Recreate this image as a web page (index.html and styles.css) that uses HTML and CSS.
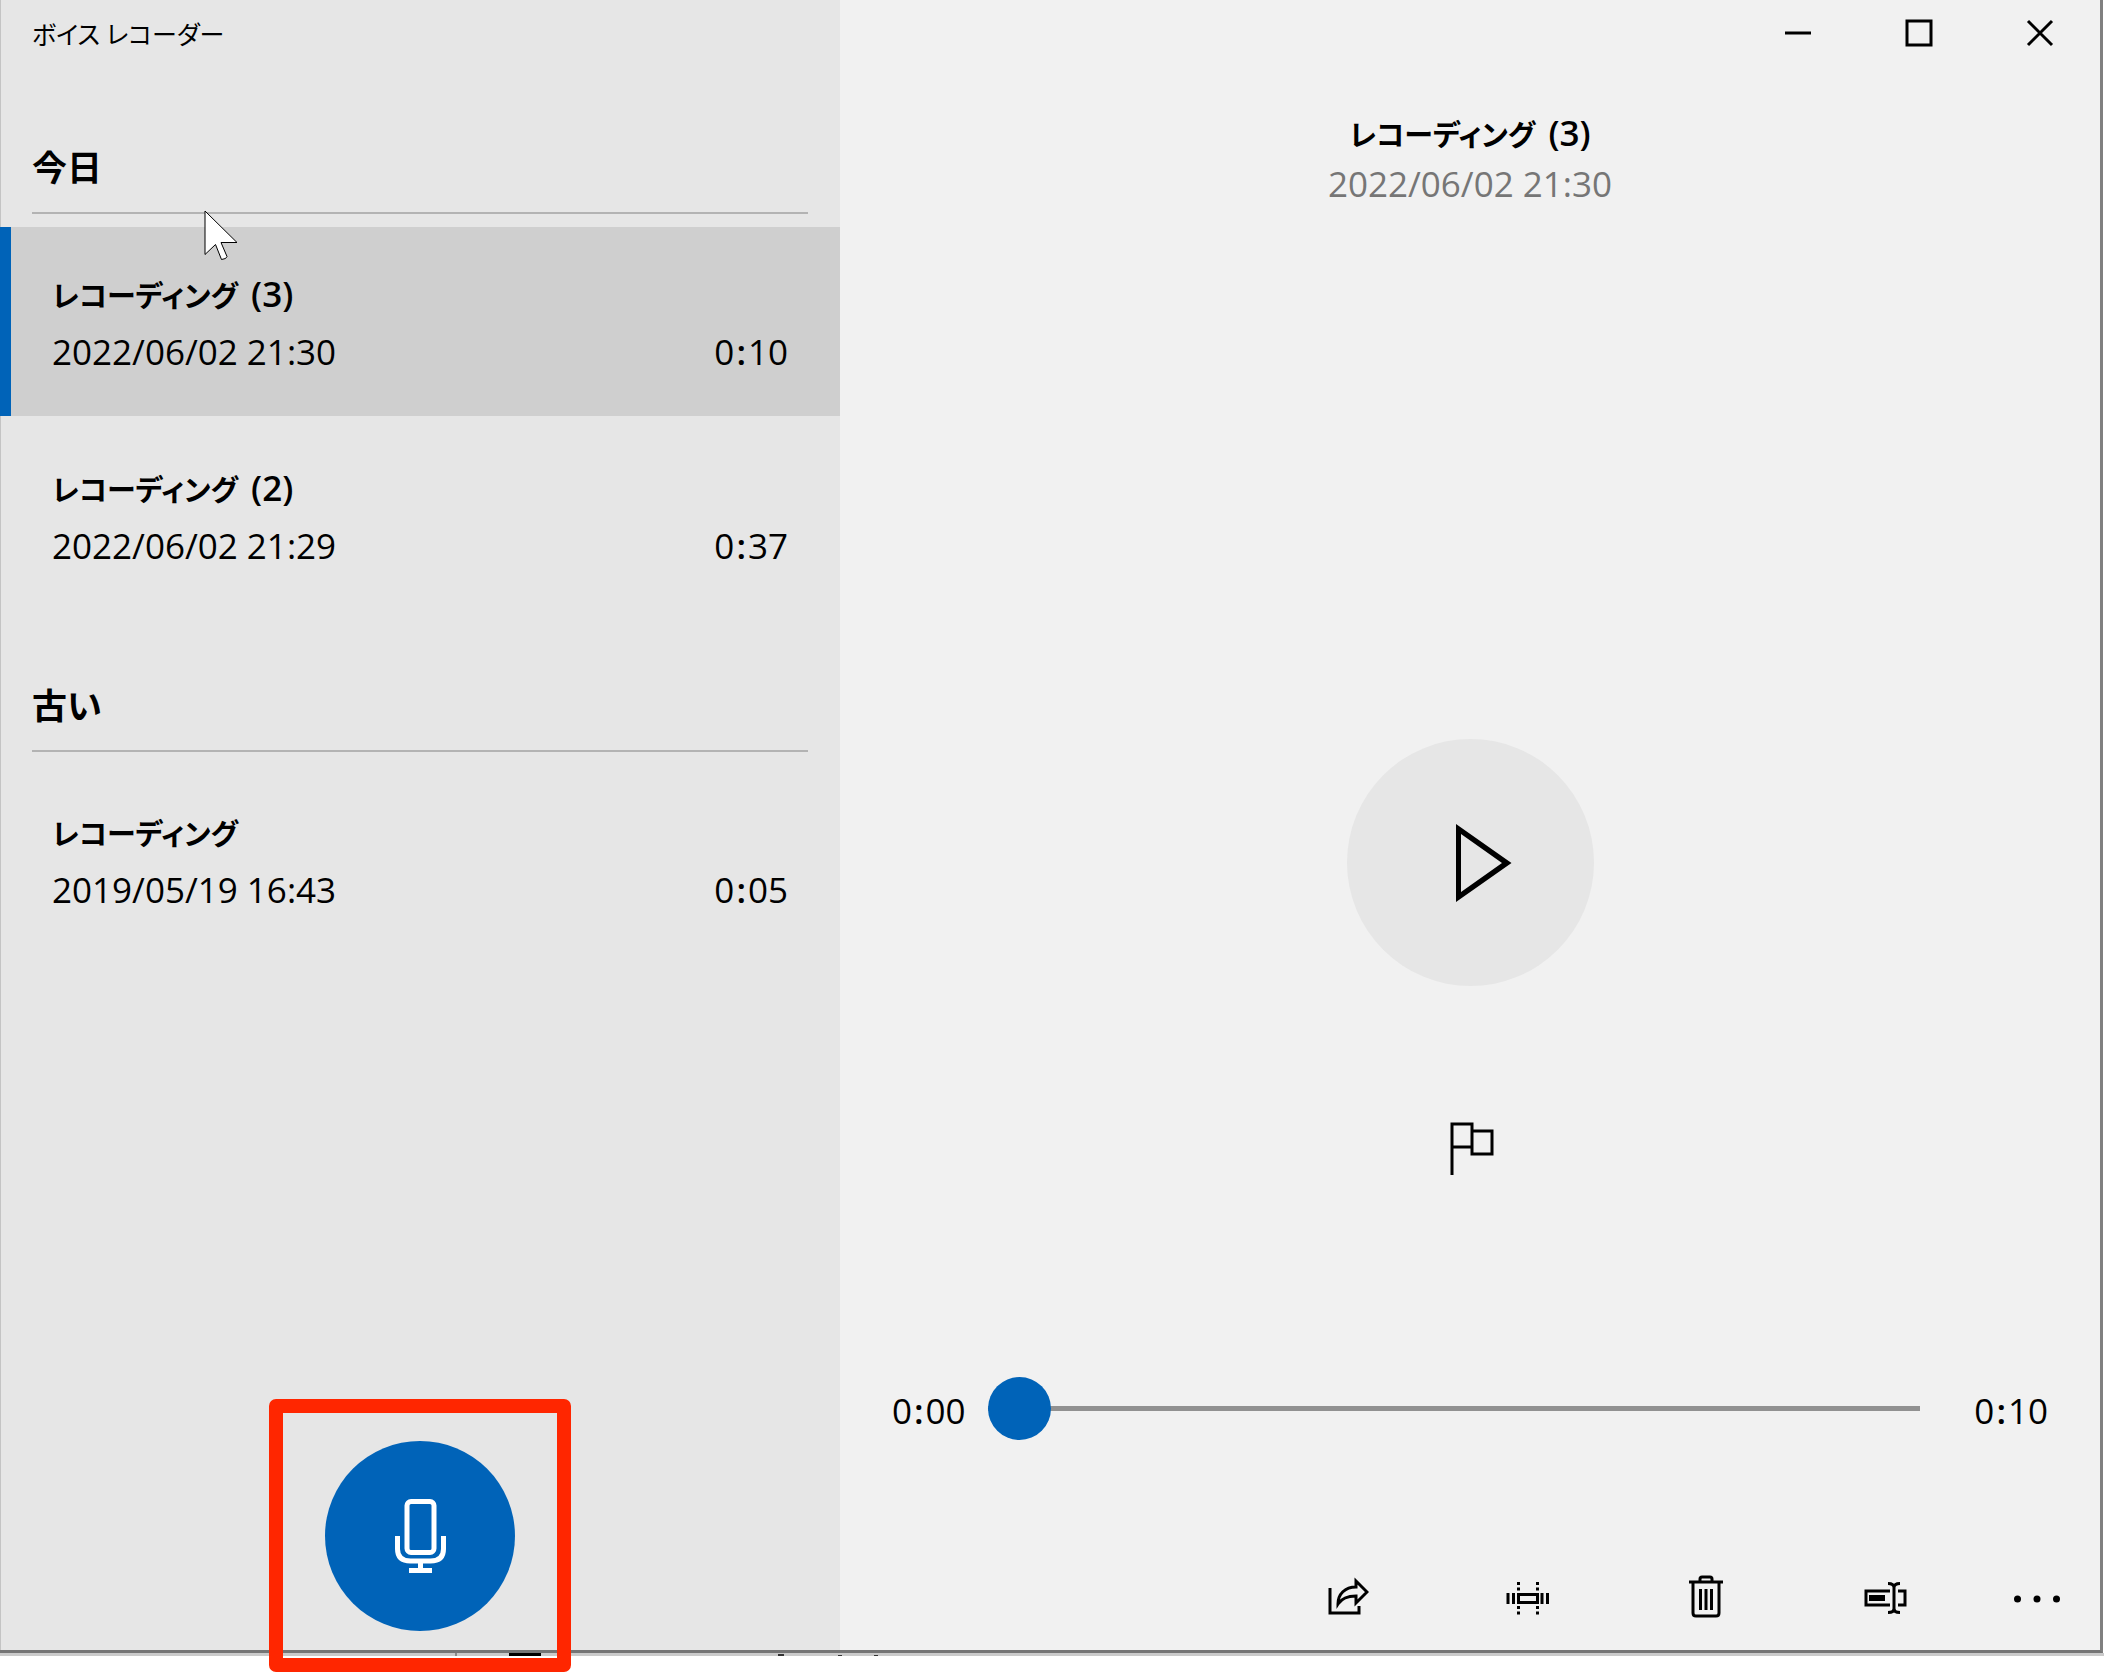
FILE: index.html
```html
<!DOCTYPE html>
<html lang="ja">
<head>
<meta charset="utf-8">
<meta name="viewport" content="width=device-width, initial-scale=1">
<title>ボイス レコーダー</title>
<link rel="stylesheet" href="styles.css">
</head>
<body>
<div class="app">
  <aside class="sidebar">
    <h1 class="app-title">ボイス レコーダー</h1>

    <section class="group">
      <h2 class="group-title">今日</h2>
      <ul class="recordings">
        <li>
          <button class="recording selected" type="button">
            <span class="name">レコーディング<span class="count"> (3)</span></span>
            <span class="meta"><span>2022/06/02 21:30</span><span>0<span class="colon">:</span>10</span></span>
          </button>
        </li>
        <li>
          <button class="recording" type="button">
            <span class="name">レコーディング<span class="count"> (2)</span></span>
            <span class="meta"><span>2022/06/02 21:29</span><span>0<span class="colon">:</span>37</span></span>
          </button>
        </li>
      </ul>
    </section>

    <section class="group">
      <h2 class="group-title">古い</h2>
      <ul class="recordings">
        <li>
          <button class="recording" type="button">
            <span class="name">レコーディング</span>
            <span class="meta"><span>2019/05/19 16:43</span><span>0<span class="colon">:</span>05</span></span>
          </button>
        </li>
      </ul>
    </section>

    <div class="record-area">
      <button class="record" type="button" aria-label="録音">
        <svg width="53" height="76" viewBox="0 0 53 76" fill="none" stroke="#fff" stroke-width="5">
          <rect x="13" y="3.5" width="27" height="51" rx="4"/>
          <path d="M3.500 38v13q0 12 13 12h20q13 0 13-12V38M26.500 63v9M15 72.500h23"/>
        </svg>
      </button>
      <div class="highlight"></div>
    </div>
  </aside>

  <main class="player">
    <div class="caption">
      <button type="button" aria-label="最小化"><svg width="28" height="28" viewBox="0 0 28 28"><path d="M1 14h26"/></svg></button>
      <button type="button" aria-label="最大化"><svg width="28" height="28" viewBox="0 0 28 28"><path d="M2 2h24v24H2z"/></svg></button>
      <button type="button" aria-label="閉じる"><svg width="28" height="28" viewBox="0 0 28 28"><path d="M2 2l24 24M26 2L2 26"/></svg></button>
    </div>

    <header class="now">
      <h2 class="name">レコーディング<span class="count"> (3)</span></h2>
      <p class="date">2022/06/02 21:30</p>
    </header>

    <div class="stage">
      <button class="play" type="button" aria-label="再生">
        <svg width="84" height="78" viewBox="0 0 84 78"><path fill-rule="evenodd" d="M28 0L83.500 39 28 78zM33 10v58L74 39z"/></svg>
      </button>
      <button class="flag" type="button" aria-label="マーカーの追加">
        <svg width="48" height="53" viewBox="0 0 48 53"><path d="M6 53V2h20v23H6M26 9h20v23H26V9"/></svg>
      </button>
    </div>

    <div class="timeline">
      <span class="time">0<span class="colon">:</span>00</span>
      <input type="range" min="0" max="10" value="0" aria-label="再生位置">
      <span class="time">0<span class="colon">:</span>10</span>
    </div>

    <div class="toolbar">
      <button type="button" aria-label="共有">
        <svg width="42" height="42" viewBox="0 0 42 42"><path d="M3 13v25h29v-7M29 6l11 11-11 11v-7c-9 0-14 2-18 8 0-10 7-17 18-17z"/></svg>
      </button>
      <button type="button" aria-label="トリミング">
        <svg width="44" height="42" viewBox="0 0 44 42"><path d="M3 18v11M8.500 18v11M37 18v11M42.500 18v11M13.500 19.500h19v8h-19zM13.500 7v3M13.500 12.500v3M13.500 31v3M13.500 36.500v3M32.500 7v3M32.500 12.500v3M32.500 31v3M32.500 36.500v3"/></svg>
      </button>
      <button type="button" aria-label="削除">
        <svg width="36" height="44" viewBox="0 0 36 44"><path d="M1 8h34M12 8V5q0-2 2-2h8q2 0 2 2v3M5 8v31q0 3 3 3h20q3 0 3-3V8M12.500 15v21M18 15v21M23.500 15v21"/></svg>
      </button>
      <button type="button" aria-label="名前の変更">
        <svg width="44" height="42" viewBox="0 0 44 42"><path d="M27 16H3v14h24M35 16h7v14h-7M25 8.500q6 0 6 4v21q0 4-6 4M37 8.500q-6 0-6 4v21q0 4 6 4"/><path class="solid" d="M6 20h16v6H6z"/></svg>
      </button>
      <button class="more" type="button" aria-label="その他">
        <svg width="48" height="42" viewBox="0 0 48 42"><g class="solid"><circle cx="4.500" cy="24" r="3.500"/><circle cx="24" cy="24" r="3.500"/><circle cx="43.500" cy="24" r="3.500"/></g></svg>
      </button>
    </div>
  </main>
</div>

<div class="behind">
  <svg width="900" height="3" viewBox="0 0 900 3"><path fill="#8a8a8a" d="M455 0h2v3h-2z"/><path d="M509 0h32v3h-32z"/><path fill="#333" d="M778 1h6v2h-6zM838 2h4v1h-4zM874 2h4v1h-4z"/></svg>
</div>

<svg class="pointer" width="36" height="54" viewBox="0 0 36 54"><path fill="#fff" stroke="#000" d="M1 1v43.500l10.500-10 6 15 4-1 1.500-2-6-14h16z"/></svg>
</body>
</html>
```

FILE: styles.css
```css
* {
  box-sizing: border-box;
}

body {
  margin: 0;
  min-height: 100vh;
  display: flex;
  flex-direction: column;
  padding-bottom: 16px;
  background: #fff;
  color: #000;
  font-family: "Open Sans", "Noto Sans CJK JP", sans-serif;
  font-size: 35px;
  line-height: 48px;
}

h1, h2, p, ul {
  margin: 0;
  padding: 0;
}

button {
  display: flex;
  align-items: center;
  justify-content: center;
  margin: 0;
  padding: 0;
  border: 0;
  background: none;
  color: inherit;
  font: inherit;
}

.app {
  flex: 1;
  display: grid;
  grid-template-columns: 2fr 3fr;
  margin-right: 1px;
  border-right: 3px solid #808080;
  border-bottom: 3px solid #757575;
}

.sidebar {
  display: flex;
  flex-direction: column;
  box-shadow: inset 1px 0 #c4c4c4;
  background: #e6e6e6;
}

.app-title {
  padding: 10px 32px 0;
  margin-bottom: 14px;
  font-size: 25px;
  font-weight: 400;
  font-feature-settings: "palt";
}

.group {
  padding-top: 72px;
}

.group-title {
  margin: 0 32px 13px;
  padding-bottom: 20px;
  border-bottom: 2px solid #b3b3b3;
  font-size: 35px;
  font-weight: 600;
}

.recordings {
  display: flex;
  flex-direction: column;
  gap: 5px;
  list-style: none;
}

.recording {
  width: 100%;
  height: 189px;
  flex-direction: column;
  align-items: stretch;
  gap: 8px;
  padding: 5px 52px 0;
  text-align: left;
}

.selected {
  padding-left: 41px;
  border-left: 11px solid #0063b8;
  background: #cfcfcf;
}

.name {
  font-size: 29px;
  font-weight: 600;
  font-feature-settings: "palt";
}

.count {
  margin-left: 4px;
  font-size: 35px;
  line-height: 1;
  white-space: pre;
}

.colon {
  padding: 0 2px;
  font-weight: 600;
}

.meta {
  display: flex;
  justify-content: space-between;
}

.record-area {
  position: relative;
  display: flex;
  justify-content: center;
  margin-top: auto;
  padding-bottom: 19px;
}

.record {
  width: 190px;
  height: 190px;
  border-radius: 50%;
  background: #0063b8;
}

.highlight {
  position: absolute;
  top: -42px;
  left: calc(50% - 151px);
  width: 302px;
  height: 273px;
  border: 14px solid #ff2600;
  border-radius: 7px;
  z-index: 1;
}

.player {
  display: flex;
  flex-direction: column;
  background: #f1f1f1;
}

.caption {
  display: flex;
  justify-content: flex-end;
}

.caption button {
  width: 121px;
  height: 66px;
}

.player svg {
  fill: none;
  stroke: #000;
  stroke-width: 3;
}

.now {
  padding-top: 45px;
  text-align: center;
}

.date {
  margin-top: 1px;
  color: #767676;
}

.stage {
  flex: 1;
  display: flex;
  flex-direction: column;
  align-items: center;
}

.stage::before {
  content: "";
  flex: 29;
}

.stage::after {
  content: "";
  flex: 11;
}

.play {
  width: 247px;
  height: 247px;
  margin-bottom: 136px;
  border-radius: 50%;
  background: #e6e6e6;
}

.player .play svg, .player .solid {
  fill: #000;
  stroke: none;
}

.timeline {
  display: flex;
  align-items: center;
  gap: 22px;
  padding: 0 52px;
}

.time {
  padding-top: 4px;
}

.timeline input {
  flex: 1;
  min-width: 0;
  height: 63px;
  margin: 0 32px 0 0;
  appearance: none;
  background: linear-gradient(#919191, #919191) center / 100% 5px no-repeat;
}

.timeline input::-webkit-slider-thumb {
  appearance: none;
  width: 63px;
  height: 63px;
  border-radius: 50%;
  background: #0063b8;
}

.toolbar {
  display: flex;
  justify-content: flex-end;
  margin-top: 104px;
}

.toolbar button {
  width: 179px;
  height: 106px;
  padding-bottom: 2px;
}

.toolbar .more {
  width: 126px;
}

/* Edge of the window that lies under the app */
.behind {
  height: 3px;
  display: flex;
  background: #cacaca;
}

.pointer {
  position: absolute;
  top: 210px;
  left: 204px;
}
```
